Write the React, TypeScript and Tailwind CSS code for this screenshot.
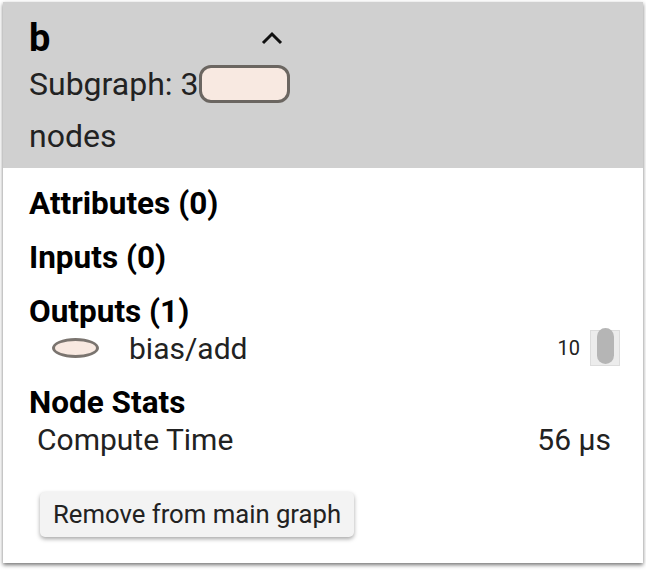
const font = { fontFamily: "Roboto, 'Noto Sans', sans-serif" };

function Chevron() {
  return (
    <svg width="22" height="14" viewBox="0 0 22 14" className="block">
      <polyline points="2,12 11,3 20,12" fill="none" stroke="#111" strokeWidth="3" />
    </svg>
  );
}

export default function App() {
  return (
    <div className="pl-[3px] pt-[2px] bg-white w-[646px] h-[570px]" style={font}>
      <div className="w-[640px] h-[561px] bg-white shadow-[0_2px_4px_rgba(0,0,0,0.55)] flex flex-col">
        <div className="bg-[#d0d0d0] pl-[26px] pt-[16px] pb-[6px]">
          <div className="w-[254px] flex items-center justify-between h-[40px]">
            <span className="text-[38px] font-bold leading-[40px] text-black">b</span>
            <Chevron />
          </div>
          <div className="w-[300px] text-[32px] leading-[52px] text-[#222]">
            Subgraph: 3
            <span className="inline-block align-[-8px] ml-px w-[91px] h-[38px] rounded-[12px] border-[3px] border-[#6b6661] bg-[#f8e9e1]" />
            {" "}nodes
          </div>
        </div>

        <div className="pt-[18px] pl-[26px] pr-[32px]">
          <div className="text-[31.5px] font-bold leading-[36px] text-black">Attributes (0)</div>
          <div className="mt-[18px] text-[31.5px] font-bold leading-[36px] text-black">Inputs (0)</div>
          <div className="mt-[18px] text-[31.5px] font-bold leading-[36px] text-black">Outputs (1)</div>
          <div className="h-[36px] flex items-center">
            <span className="ml-[23px] w-[47px] h-[20px] rounded-[50%] border-[3px] border-[#7a746f] bg-[#f8e9e1]" />
            <span className="ml-[30px] text-[30px] text-[#222]">bias/add</span>
            <span className="ml-auto text-[20px] text-[#222]">10</span>
            <span className="ml-[10px] mr-[-9px] w-[30px] h-[36px] bg-[#ececec] border border-[#dcdcdc] flex justify-center">
              <span className="mt-[-3px] w-[17px] h-[36px] rounded-full bg-[#b5b5b5]" />
            </span>
          </div>
          <div className="mt-[19px] text-[31.5px] font-bold leading-[36px] text-black">Node Stats</div>
          <div className="h-[36px] pl-[8px] flex items-center justify-between text-[30px] text-[#222]">
            <span>Compute Time</span>
            <span>56 µs</span>
          </div>
          <button className="mt-[35px] ml-[11px] h-[45px] px-[13px] rounded-[5px] bg-[#f3f3f3] text-[25.7px] text-[#222] shadow-[0_2px_4px_rgba(0,0,0,0.35)]">
            Remove from main graph
          </button>
        </div>
      </div>
    </div>
  );
}
